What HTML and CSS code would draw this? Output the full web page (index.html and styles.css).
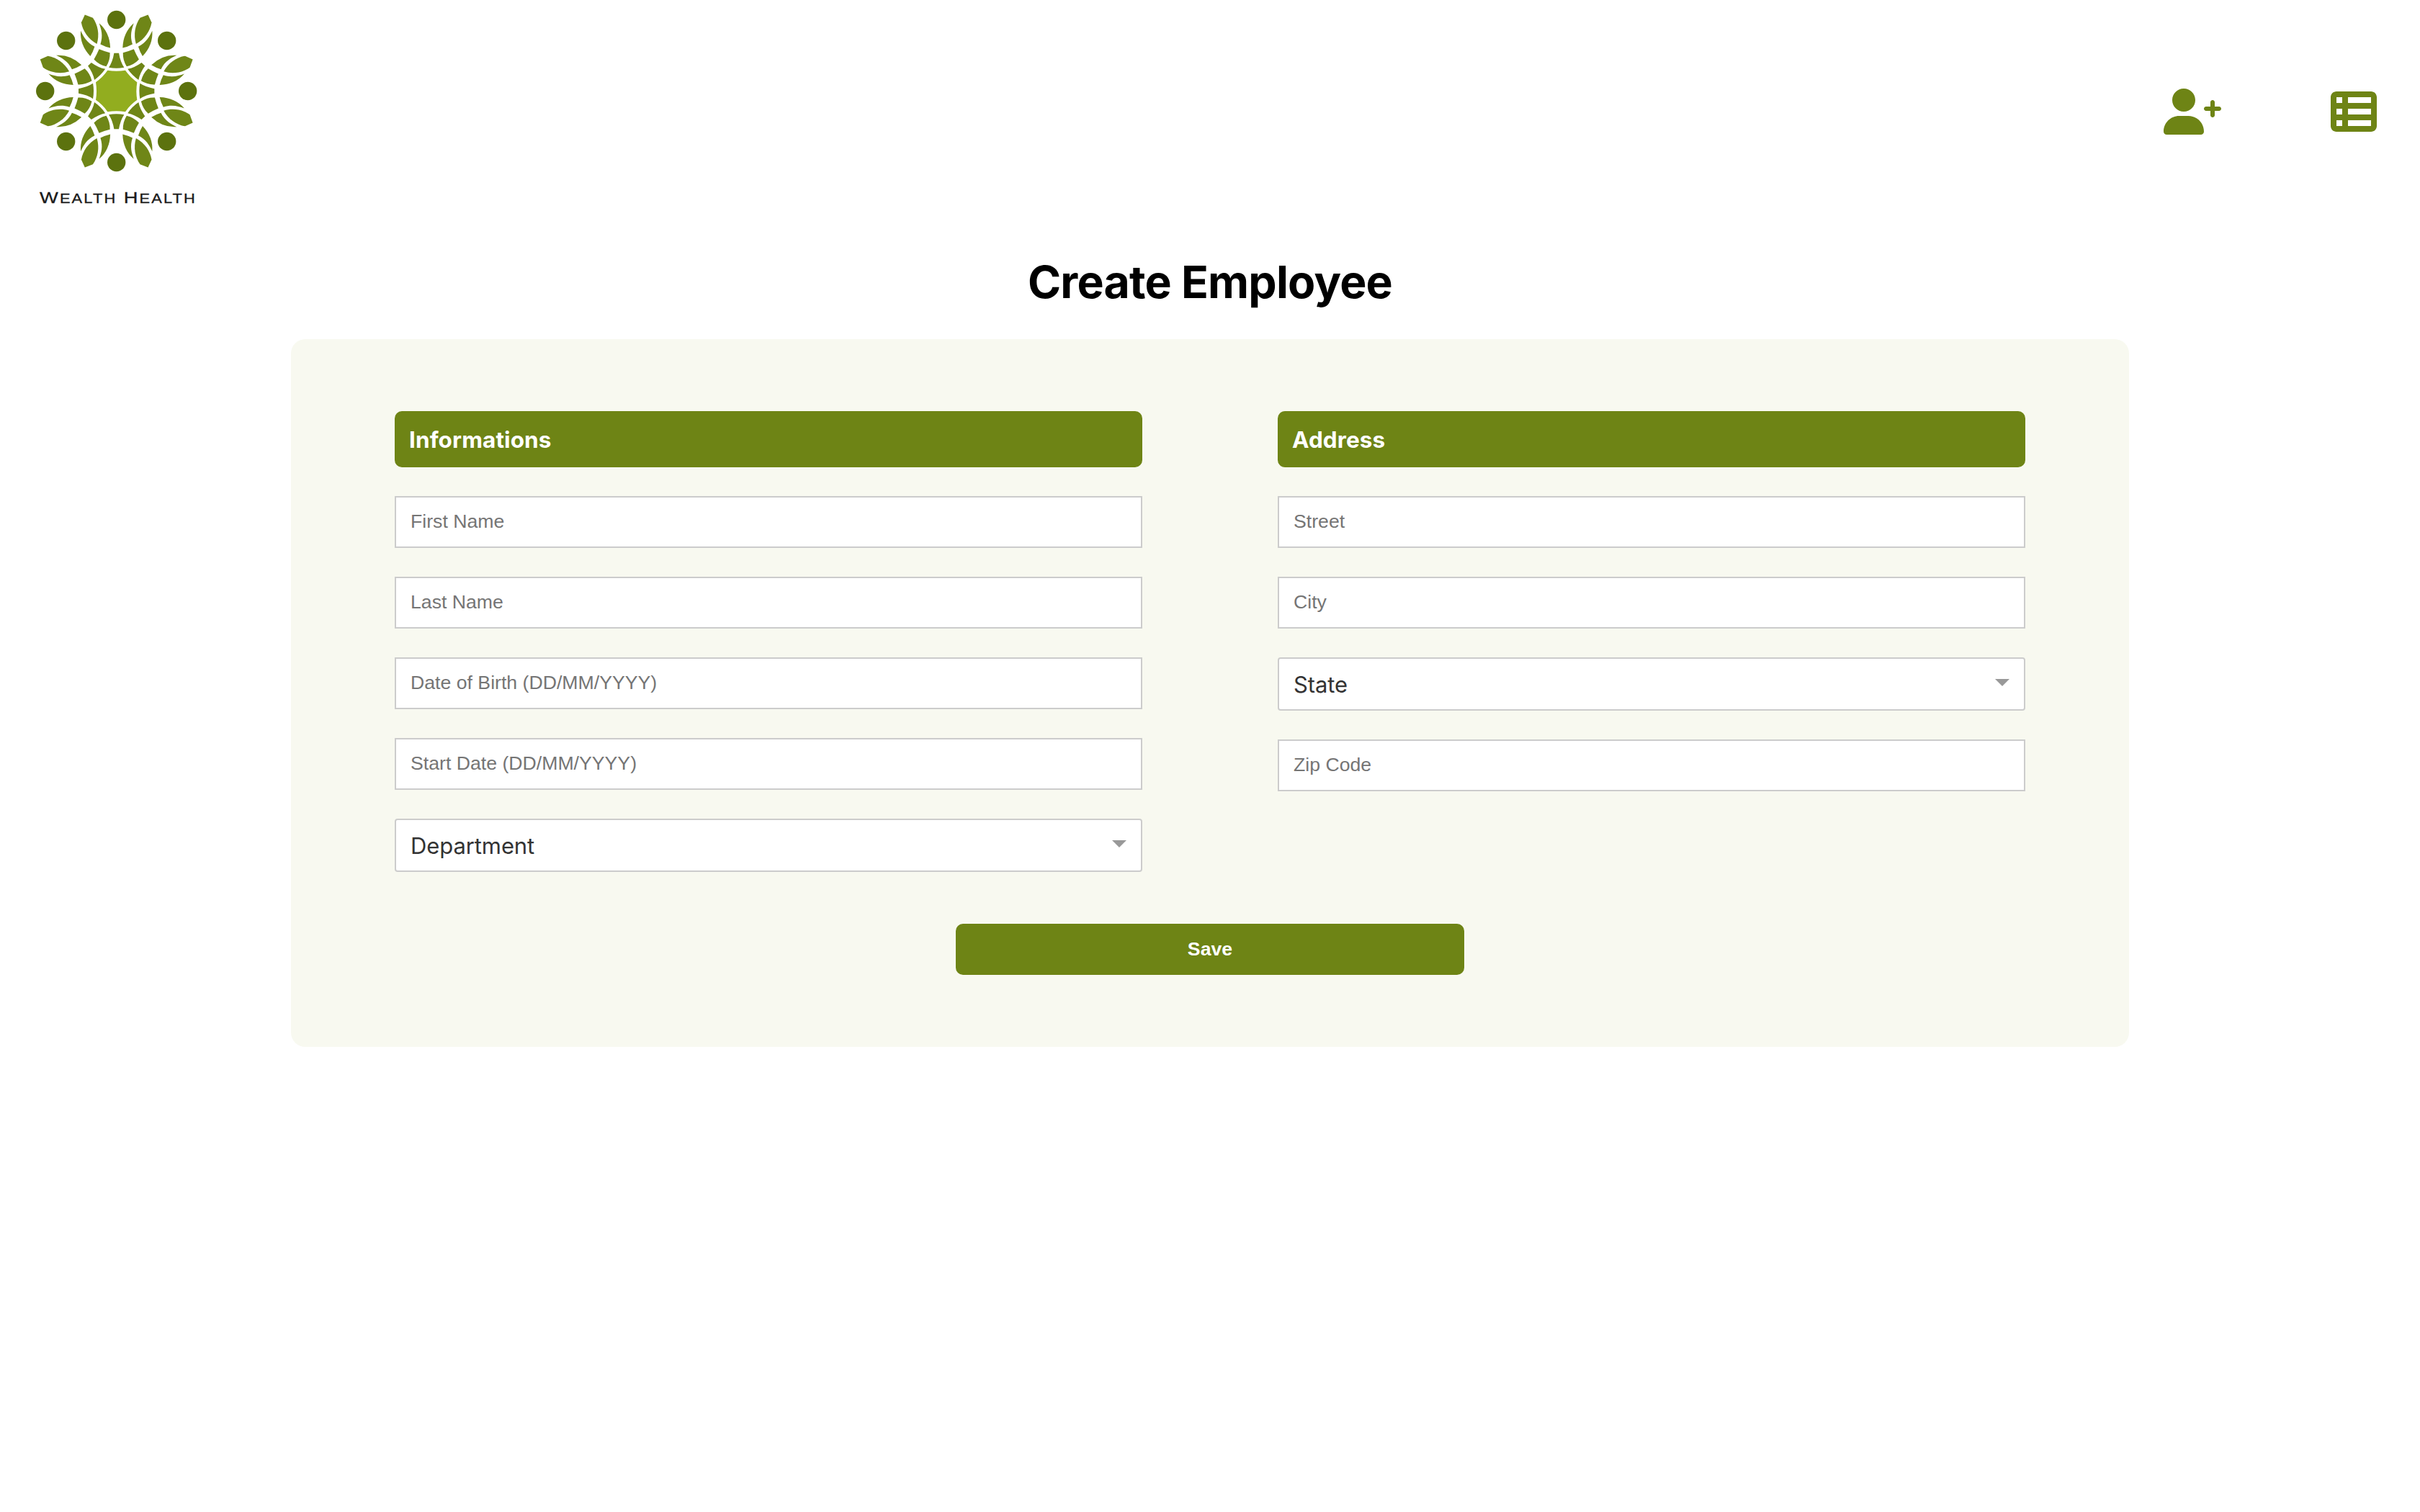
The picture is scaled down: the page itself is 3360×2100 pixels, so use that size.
FILE: index.html
```html
<!DOCTYPE html>
<html lang="en">
<head>
<meta charset="utf-8">
<title>Create Employee</title>
<link rel="stylesheet" href="styles.css">
</head>
<body>
<header class="header">
  <svg class="logo" viewBox="0 0 270 300" role="img" aria-label="Wealth Health">
    <defs>
      <path id="leaflet" d="M41.6-289Q68-236 45-176Q27-189 13-206C38-235 40-262 41.6-289z"/>
      <g id="petal">
        <g transform="rotate(22.5)">
          <path d="M0-344L26-320C34-285 26-245 0-213C-26-245-34-285-26-320z"/>
          <use href="#leaflet"/><use href="#leaflet" transform="scale(-1 1)"/>
          <path d="M0-189Q17-172 36-158Q26-130 0-111Q-26-130-36-158Q-17-172 0-189z"/>
        </g>
        <path d="M-10-158H10Q16-122 32-98Q0-92-32-98Q-16-122-10-158z"/>
        <circle class="logo-dot" cy="-297" r="38"/>
      </g>
    </defs>
    <g class="logo-mark" transform="translate(131.7 126.5) scale(.3333)">
      <use href="#petal"/>
      <use href="#petal" transform="rotate(45)"/>
      <use href="#petal" transform="rotate(90)"/>
      <use href="#petal" transform="rotate(135)"/>
      <use href="#petal" transform="rotate(180)"/>
      <use href="#petal" transform="rotate(225)"/>
      <use href="#petal" transform="rotate(270)"/>
      <use href="#petal" transform="rotate(315)"/>
      <path class="logo-core" d="M-37-86Q0-80 37-86Q57-57 86-37Q80 0 86 37Q57 57 37 86Q0 80-37 86Q-57 57-86 37Q-80 0-86-37Q-57-57-37-86z"/>
    </g>
    <text class="logo-text" x="25" y="282" textLength="218" lengthAdjust="spacingAndGlyphs"><tspan class="logo-cap">W</tspan>EALTH <tspan class="logo-cap">H</tspan>EALTH</text>
  </svg>
  <nav class="nav">
    <a class="nav-link" aria-label="Create employee"><svg class="icon icon-user" viewBox="0 0 640 512"><path d="M224 256c70.7 0 128-57.31 128-128S294.7 0 224 0S96 57.31 96 128S153.3 256 224 256zM274.7 304H173.3C77.61 304 0 381.6 0 477.3C0 496.5 15.52 512 34.66 512h378.7C432.5 512 448 496.5 448 477.3C448 381.6 370.4 304 274.7 304zM616 200h-48v-48C568 138.8 557.3 128 544 128s-24 10.75-24 24v48h-48C458.8 200 448 210.8 448 224s10.75 24 24 24h48v48C520 309.3 530.8 320 544 320s24-10.75 24-24v-48h48C629.3 248 640 237.3 640 224S629.3 200 616 200z"/></svg></a>
    <a class="nav-link" aria-label="Employee list"><svg class="icon icon-list" viewBox="0 0 512 512"><path d="M0 96C0 60.7 28.7 32 64 32H448c35.3 0 64 28.7 64 64V416c0 35.3-28.7 64-64 64H64c-35.3 0-64-28.7-64-64V96zm64 0v64h64V96H64zm384 0H192v64H448V96zM64 224v64h64V224H64zm384 0H192v64H448V224zM64 352v64h64V352H64zm384 0H192v64H448V352z"/></svg></a>
  </nav>
</header>
<main class="main">
  <h1 class="title">Create Employee</h1>
  <form class="form">
    <div class="columns">
      <section class="column">
        <h2 class="heading">Informations</h2>
        <input class="field" type="text" placeholder="First Name">
        <input class="field" type="text" placeholder="Last Name">
        <input class="field" type="text" placeholder="Date of Birth (DD/MM/YYYY)">
        <input class="field" type="text" placeholder="Start Date (DD/MM/YYYY)">
        <div class="select"><span class="select-label">Department</span><span class="caret"></span></div>
      </section>
      <section class="column">
        <h2 class="heading">Address</h2>
        <input class="field" type="text" placeholder="Street">
        <input class="field" type="text" placeholder="City">
        <div class="select"><span class="select-label">State</span><span class="caret"></span></div>
        <input class="field" type="text" placeholder="Zip Code">
      </section>
    </div>
    <button class="save" type="button">Save</button>
  </form>
</main>
</body>
</html>
```
FILE: styles.css
```css
* { box-sizing: border-box; }
body {
  margin: 0;
  background: #fff;
  color: #000;
  font-family: Inter, "Liberation Sans", sans-serif;
}
.header {
  display: flex;
  justify-content: space-between;
  height: 310px;
  padding: 0 60px 0 30px;
}
.logo { width: 270px; height: 300px; }
.logo-mark { fill: #6f8617; }
.logo-dot { fill: #5c720e; }
.logo-core { fill: #92ad1f; }
.logo-text {
  font-family: "Liberation Sans", Arial, sans-serif;
  font-size: 17.6px;
  letter-spacing: 1.7px;
  word-spacing: 1px;
  fill: #1a1a1a;
  stroke: #1a1a1a;
  stroke-width: .3px;
}
.logo-cap { font-size: 22px; }
.nav { display: flex; gap: 152px; padding-top: 123px; }
.nav-link { display: flex; height: 64px; }
.icon { height: 64px; fill: #6e8415; }
.icon-user { width: 80px; }
.icon-list { width: 64px; }
.title {
  margin: 0;
  height: 161px;
  padding-top: 41px;
  font-size: 62.5px;
  line-height: 80px;
  font-weight: 700;
  letter-spacing: -.8px;
  text-align: center;
}
.form {
  width: 2552px;
  height: 983px;
  margin: 0 auto;
  padding: 100px 144px;
  border-radius: 20px;
  background: #f8f9f0;
  display: flex;
  flex-direction: column;
  align-items: center;
  gap: 72px;
}
.columns { display: flex; gap: 188px; }
.column { width: 1038px; display: flex; flex-direction: column; gap: 40px; }
.heading {
  margin: 0;
  height: 78px;
  padding: 1px 20px 0;
  border-radius: 10px;
  background: #6e8415;
  color: #fff;
  font-size: 31.5px;
  line-height: 78px;
  font-weight: 700;
  letter-spacing: .1px;
}
.field {
  height: 72px;
  padding: 0 20px 2px;
  border: 2px solid #ccc;
  border-radius: 0;
  background: #fff;
  font-family: "Liberation Sans", Arial, sans-serif;
  font-size: 26.667px;
}
.field::placeholder { color: #757575; opacity: 1; }
.select {
  height: 74px;
  padding: 0 20px;
  border: 2px solid #ccc;
  border-radius: 4px;
  background: #fff;
  display: flex;
  align-items: center;
  justify-content: space-between;
}
.select-label { color: #333; font-size: 31px; letter-spacing: -.1px; }
.caret {
  margin-bottom: 4px;
  border: 10px solid transparent;
  border-top-color: #999;
  border-bottom: 0;
}
.save {
  width: 706px;
  height: 71px;
  padding: 0 0 1px;
  border: 0;
  border-radius: 10px;
  background: #6e8415;
  color: #fff;
  font-family: "Liberation Sans", Arial, sans-serif;
  font-size: 26.667px;
  font-weight: 700;
}
```
